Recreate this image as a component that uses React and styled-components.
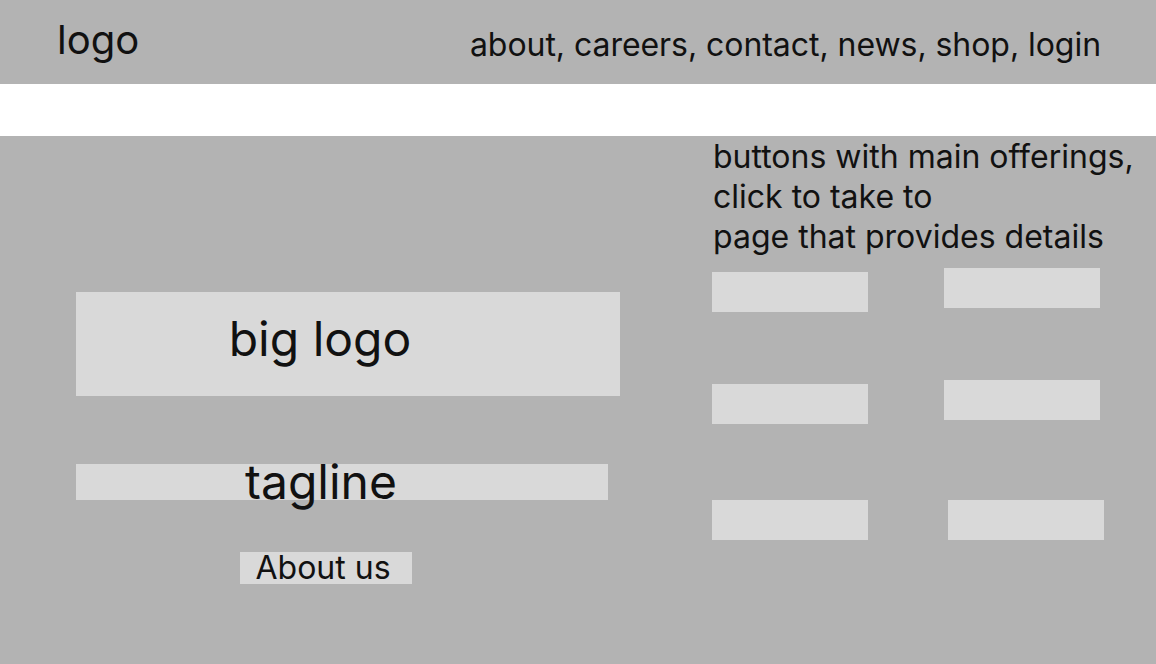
import React from 'react';
import styled, { createGlobalStyle } from 'styled-components';

const GlobalStyle = createGlobalStyle`
  html, body {
    margin: 0;
    padding: 0;
    background: #b3b3b3;
    font-family: 'Inter', 'Liberation Sans', sans-serif;
    color: #111;
  }
`;

// Layout
const Page = styled.div`
  width: 1156px;
  min-height: 664px;
  background: #b3b3b3;
`;

const Header = styled.header`
  height: 84px;
  display: flex;
  align-items: center;
  justify-content: space-between;
  padding: 0 55px 0 57px;
  box-sizing: border-box;
`;

const Logo = styled.div`
  font-size: 40px;
  line-height: 1;
  margin-top: -4px;
`;

const Nav = styled.nav`
  font-size: 32px;
  line-height: 1;
  margin-top: 6px;
  letter-spacing: -0.05px;
`;

const Band = styled.div`
  height: 52px;
  background: #ffffff;
`;

const Main = styled.main`
  display: flex;
  align-items: flex-start;
`;

const LeftColumn = styled.section`
  width: 636px;
  padding: 156px 0 0 76px;
  box-sizing: border-box;
  display: flex;
  flex-direction: column;
`;

const Placeholder = styled.div`
  background: #d9d9d9;
  box-sizing: border-box;
`;

const BigLogo = styled(Placeholder)`
  width: 544px;
  height: 104px;
  display: flex;
  justify-content: center;
  padding: 23px 56px 0 0;
  font-size: 48px;
  line-height: 1;
`;

const Tagline = styled(Placeholder)`
  width: 532px;
  height: 36px;
  margin-top: 68px;
  display: flex;
  justify-content: center;
  align-items: flex-end;
  padding-right: 42px;
  font-size: 48px;
  line-height: 1;
`;

const TaglineText = styled.span`
  margin-bottom: -6px;
`;

const AboutButton = styled(Placeholder)`
  width: 172px;
  height: 32px;
  margin: 52px 0 0 164px;
  display: flex;
  align-items: flex-end;
  justify-content: center;
  padding-right: 6px;
  font-size: 32px;
  line-height: 1;
`;

const RightColumn = styled.section`
  padding: 1px 0 0 76px;
  display: flex;
  flex-direction: column;
`;

const Offerings = styled.p`
  margin: 0 0 0 1px;
  font-size: 32px;
  line-height: 40px;
`;

const ButtonGrid = styled.div`
  display: grid;
  grid-template-columns: 156px 156px;
  grid-auto-rows: 112px;
  column-gap: 76px;
  margin-top: 11px;
  align-items: start;
`;

const OfferButton = styled(Placeholder)`
  width: 156px;
  height: 40px;
  margin-top: ${p => p.$dy || 0}px;
  margin-left: ${p => p.$dx || 0}px;
`;

const offerButtons = [
  { dy: 4, dx: 0 },
  { dy: 0, dx: 0 },
  { dy: 4, dx: 0 },
  { dy: 0, dx: 0 },
  { dy: 8, dx: 0 },
  { dy: 8, dx: 4 },
];

const App = () => {
  return (
    <Page>
      <GlobalStyle />
      <Header>
        <Logo>logo</Logo>
        <Nav>about, careers, contact, news, shop, login</Nav>
      </Header>
      <Band />
      <Main>
        <LeftColumn>
          <BigLogo>big logo</BigLogo>
          <Tagline>
            <TaglineText>tagline</TaglineText>
          </Tagline>
          <AboutButton>About us</AboutButton>
        </LeftColumn>
        <RightColumn>
          <Offerings>
            buttons with main offerings,
            <br />
            click to take to
            <br />
            page that provides details
          </Offerings>
          <ButtonGrid>
            {offerButtons.map((b, i) => (
              <OfferButton key={i} $dy={b.dy} $dx={b.dx} />
            ))}
          </ButtonGrid>
        </RightColumn>
      </Main>
    </Page>
  );
};

export default App;
